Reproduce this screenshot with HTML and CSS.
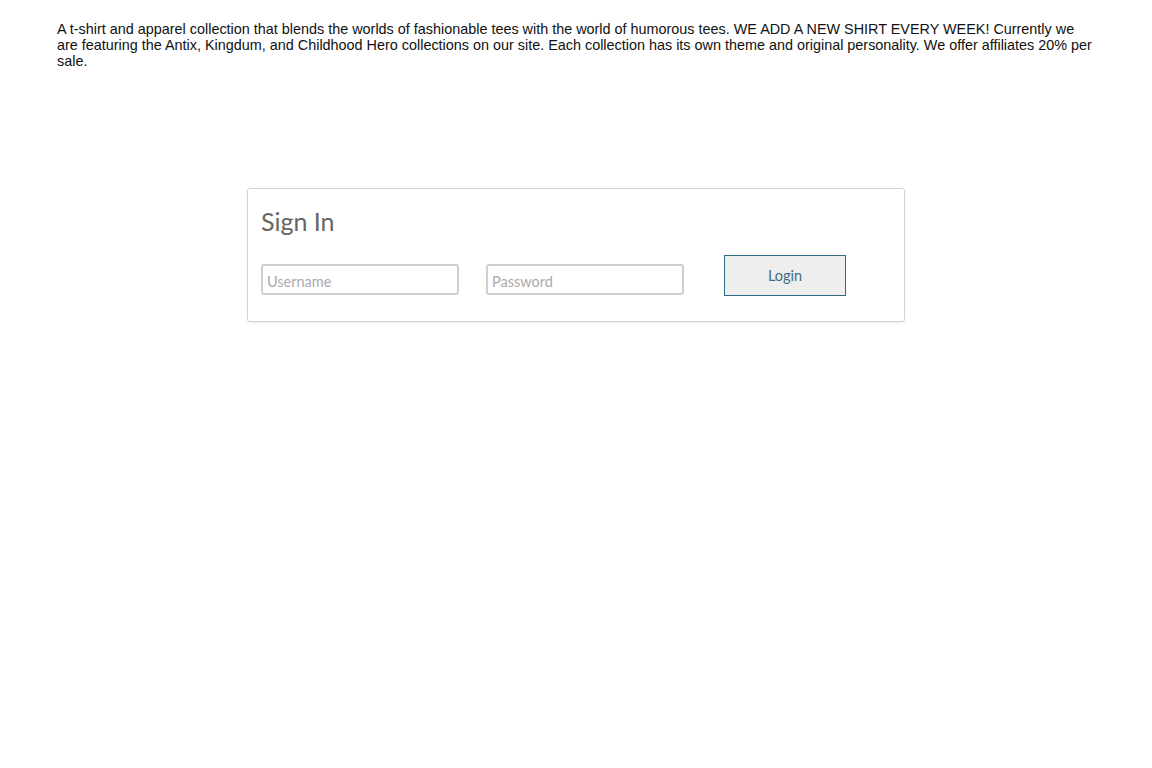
FILE: index.html
```html
<!DOCTYPE html>
<html lang="en">
<head>
  <meta charset="UTF-8">
  <title>Sign In</title>
  <link rel="stylesheet" href="styles.css">
</head>
<body>
  <main>
    <p class="intro">A t-shirt and apparel collection that blends the worlds of fashionable tees with the world of humorous tees. WE ADD A NEW SHIRT EVERY WEEK! Currently we are featuring the Antix, Kingdum, and Childhood Hero collections on our site. Each collection has its own theme and original personality. We offer affiliates 20% per sale.</p>

    <div class="signin-box">
      <h2>Sign In</h2>
      <form class="signin-form">
        <input type="text" placeholder="Username">
        <input type="password" placeholder="Password">
        <button type="submit">Login</button>
      </form>
    </div>
  </main>
</body>
</html>
```

FILE: styles.css
```css
body {
  margin: 0;
  background: #fff;
  font-family: "Liberation Sans", Arial, sans-serif;
}

main {
  padding: 21px 57px 20px;
}

.intro {
  margin: 0;
  font-size: 14.4px;
  line-height: 16px;
  color: #111;
}

.signin-box {
  width: 656px;
  height: 132px;
  margin: 119px auto 0;
  border: 1px solid #d4d4d4;
  border-radius: 3px;
  box-shadow: 0 1px 2px rgba(0,0,0,0.08);
  font-family: "Lato", "Noto Sans", sans-serif;
}

h2 {
  margin: 17px 0 0 13px;
  font-size: 25px;
  font-weight: normal;
  color: #666;
  line-height: 30px;
}

.signin-form {
  display: flex;
  align-items: flex-end;
  margin: 19px 0 0 13px;
}

input {
  width: 198px;
  height: 31px;
  box-sizing: border-box;
  border: 2px solid #cfcfcf;
  border-radius: 3px;
  padding: 3px 4px 0;
  font-family: "Lato", "Noto Sans", sans-serif;
  font-size: 14.5px;
  color: #555;
  margin-right: 27px;
}

input::placeholder {
  color: #aaa;
}

button {
  width: 122px;
  height: 41px;
  margin: 0 0 -1px 13px;
  background: #eee;
  border: 1px solid #2f6b86;
  color: #3d6d84;
  font-family: "Lato", "Noto Sans", sans-serif;
  font-size: 14.5px;
  cursor: pointer;
}
```
